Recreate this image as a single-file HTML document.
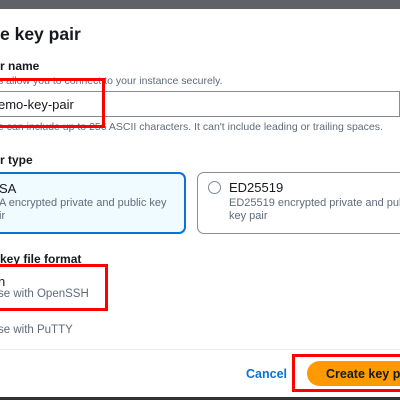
<!DOCTYPE html><html><head><style>
html,body{margin:0;width:400px;height:400px;overflow:hidden}
body{background:#fff;font-family:"Liberation Sans",sans-serif;position:relative}
.a{position:absolute;white-space:nowrap}
.b{font-weight:bold;color:#16191f;font-size:12px}
.g{color:#5f6b7a;font-size:10.5px}
.rb{position:absolute;border:3px solid #f00;box-sizing:border-box}
</style></head><body>
<div class="a" style="left:0;top:0;width:400px;height:9px;background:#5f6368"></div>
<div class="a b" style="left:0;top:24px;font-size:17.5px">e key pair</div>
<div class="a b" style="left:0;top:59px">r name</div>
<div class="a g" style="left:-2px;top:75px">s allow you to connect to your instance securely.</div>
<div class="a" style="left:-10px;top:91px;width:410px;height:26px;border:1px solid #8c8c94;border-bottom-color:#7d8998;box-sizing:border-box"></div>
<div class="a" style="left:-2px;top:97px;font-size:13px;color:#16191f">emo-key-pair</div>
<div class="a g" style="left:-2px;top:121px">e can include up to 256 ASCII characters. It can't include leading or trailing spaces.</div>
<div class="rb" style="left:-10px;top:78px;width:115px;height:50px"></div>
<div class="a b" style="left:0;top:153px">r type</div>
<div class="a" style="left:-10px;top:172px;width:196px;height:62px;border:2px solid #0972d3;background:#f0fbff;border-radius:7px;box-sizing:border-box"></div>
<div class="a" style="left:-1px;top:181px;font-size:13px;color:#16191f">SA</div>
<div class="a g" style="left:-1px;top:197px;font-size:11px">A encrypted private and public key</div>
<div class="a g" style="left:-1px;top:210px;font-size:11px">ir</div>
<div class="a" style="left:197px;top:172px;width:220px;height:62px;border:1px solid #8c8c94;border-radius:7px;box-sizing:border-box"></div>
<div class="a" style="left:208px;top:181px;width:11px;height:11px;border:1.5px solid #7d8998;border-radius:50%"></div>
<div class="a" style="left:229px;top:180px;font-size:13px;color:#16191f">ED25519</div>
<div class="a g" style="left:229px;top:197px;font-size:11px">ED25519 encrypted private and public</div>
<div class="a g" style="left:229px;top:210px;font-size:11px">key pair</div>
<div class="a b" style="left:0;top:252px">key file format</div>
<div class="a" style="left:-2px;top:274px;font-size:13px;color:#16191f">n</div>
<div class="a g" style="left:-2px;top:288px;font-size:11.5px">se with OpenSSH</div>
<div class="rb" style="left:-10px;top:264px;width:118px;height:47px"></div>
<div class="a g" style="left:-2px;top:324px;font-size:11.5px">se with PuTTY</div>
<div class="a" style="left:0;top:349px;width:400px;height:1px;background:#e9ebed"></div>
<div class="a" style="left:246px;top:367px;font-size:12.5px;font-weight:bold;color:#0972d3">Cancel</div>
<div class="a" style="left:307px;top:361px;width:110px;height:25px;background:#ff9900;border-radius:13px"></div>
<div class="a b" style="left:326px;top:367px;font-size:12.5px">Create key pair</div>
<div class="rb" style="left:292px;top:354px;width:120px;height:38px"></div>
<div class="a" style="left:0;top:397px;width:400px;height:3px;background:#333"></div>
</body></html>
